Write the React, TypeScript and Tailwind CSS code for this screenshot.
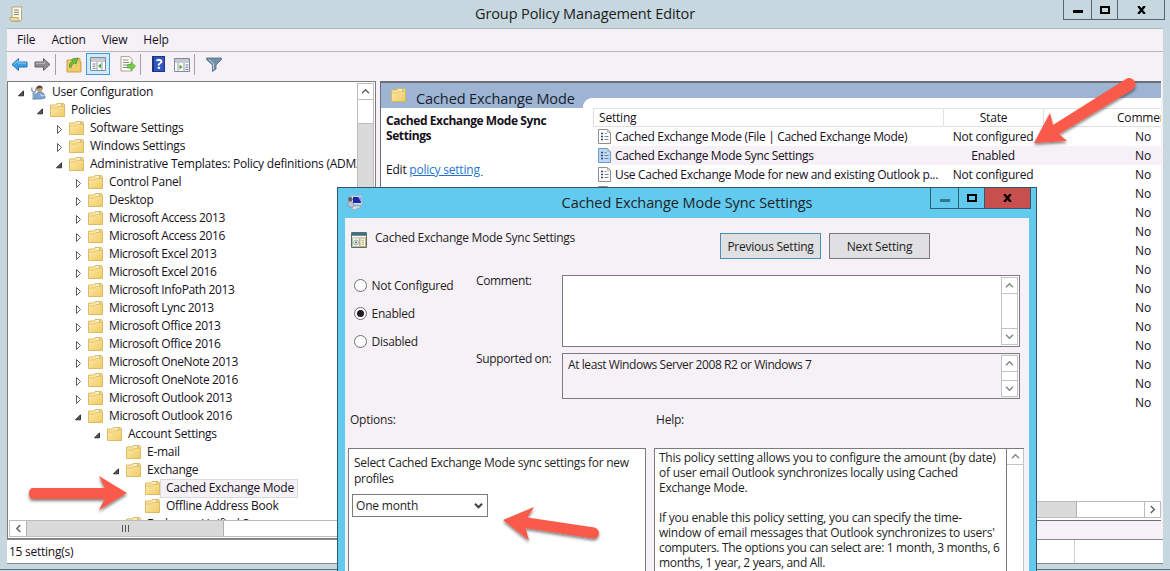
import React from 'react';

type TreeItem = {
  label: string;
  level: number;
  state?: 'open' | 'closed';
  user?: boolean;
  selected?: boolean;
};

const treeItems: TreeItem[] = [
  { label: 'User Configuration', level: 0, state: 'open', user: true },
  { label: 'Policies', level: 1, state: 'open' },
  { label: 'Software Settings', level: 2, state: 'closed' },
  { label: 'Windows Settings', level: 2, state: 'closed' },
  { label: 'Administrative Templates: Policy definitions (ADMX files)', level: 2, state: 'open' },
  { label: 'Control Panel', level: 3, state: 'closed' },
  { label: 'Desktop', level: 3, state: 'closed' },
  { label: 'Microsoft Access 2013', level: 3, state: 'closed' },
  { label: 'Microsoft Access 2016', level: 3, state: 'closed' },
  { label: 'Microsoft Excel 2013', level: 3, state: 'closed' },
  { label: 'Microsoft Excel 2016', level: 3, state: 'closed' },
  { label: 'Microsoft InfoPath 2013', level: 3, state: 'closed' },
  { label: 'Microsoft Lync 2013', level: 3, state: 'closed' },
  { label: 'Microsoft Office 2013', level: 3, state: 'closed' },
  { label: 'Microsoft Office 2016', level: 3, state: 'closed' },
  { label: 'Microsoft OneNote 2013', level: 3, state: 'closed' },
  { label: 'Microsoft OneNote 2016', level: 3, state: 'closed' },
  { label: 'Microsoft Outlook 2013', level: 3, state: 'closed' },
  { label: 'Microsoft Outlook 2016', level: 3, state: 'open' },
  { label: 'Account Settings', level: 4, state: 'open' },
  { label: 'E-mail', level: 5 },
  { label: 'Exchange', level: 5, state: 'open' },
  { label: 'Cached Exchange Mode', level: 6, selected: true },
  { label: 'Offline Address Book', level: 6 },
  { label: 'Exchange Unified S', level: 5 },
];

const policies = [
  { name: 'Cached Exchange Mode (File | Cached Exchange Mode)', state: 'Not configured' },
  { name: 'Cached Exchange Mode Sync Settings', state: 'Enabled', selected: true },
  { name: 'Use Cached Exchange Mode for new and existing Outlook p...', state: 'Not configured' },
  ...Array.from({ length: 12 }, () => ({ name: '', state: '', selected: false })),
];

const helpLines = [
  'This policy setting allows you to configure the amount (by date)',
  'of user email Outlook synchronizes locally using Cached',
  'Exchange Mode.',
  '',
  'If you enable this policy setting, you can specify the time-',
  "window of email messages that Outlook synchronizes to users'",
  'computers. The options you can select are: 1 month, 3 months, 6',
  'months, 1 year, 2 years, and All.',
];

const FolderIcon = () => (
  <svg className="w-[15px] h-[14px] shrink-0" viewBox="0 0 15 14">
    <defs>
      <linearGradient id="folder" x1="0" y1="0" x2="1" y2="1">
        <stop offset="0" stopColor="#fdebb0" />
        <stop offset="1" stopColor="#f0cb62" />
      </linearGradient>
    </defs>
    <path d="M.5 2h5l1.500-1.500h6.500l1 1.300v11.700H.5z" fill="url(#folder)" stroke="#d9b65c" strokeWidth=".9" />
    <path d="M1 5h5.500L8 3.500h6" fill="none" stroke="#e0bf6c" strokeWidth=".8" />
    <path d="M8 2h3" stroke="#fff8df" strokeWidth="1.200" />
    <path d="M11 2h1.500" stroke="#8aa7a0" />
  </svg>
);

const UserIcon = () => (
  <svg className="w-[15px] h-[15px] shrink-0" viewBox="0 0 15 15">
    <path d="M4 14c0-5 2-7 5-7s5 2 5 6l-4 1z" fill="#7fa3d2" stroke="#4f76ac" strokeWidth=".7" />
    <circle cx="8.500" cy="4" r="3" fill="#c99d6b" />
    <path d="M5.400 4C5.400 1 7 .4 8.600.4S12 1.500 11.600 4C10 2 8 3.600 5.400 4z" fill="#5d4a36" />
    <path d="M.8 2.500v3l1.400 1.300V14h1.600V6.800L5 5.500v-3" fill="none" stroke="#7899bb" strokeWidth="1.300" />
    <path d="M9 9l2 2 2.500-.6" stroke="#d8e8f8" fill="none" />
  </svg>
);

const Expander = ({ state }: { state?: 'open' | 'closed' }) => (
  <svg className="w-[8px] h-[9px] shrink-0 mt-[2px]" viewBox="0 0 8 9">
    {state === 'open' && <path d="M6.500 1.800v5H1.500z" fill="#595959" stroke="#262626" strokeWidth=".9" />}
    {state === 'closed' && <path d="M2.500 .5v8l4-4z" fill="#fff" stroke="#5e5e5e" />}
  </svg>
);

const PolicyIcon = ({ selected }: { selected?: boolean }) => (
  <svg className="w-[13px] h-[15px] shrink-0" viewBox="0 0 13 15">
    <path d="M.5.5h9l3 3v11H.5z" fill={selected ? '#bcd8f6' : '#fff'} stroke={selected ? '#6f98ca' : '#8f8f8f'} />
    <path d="M9.500.5v3h3" fill="none" stroke="#b9b9a0" />
    <path d="M3 4.500h2M3 7.500h2M3 10.500h2" stroke="#2d4368" strokeWidth="1.600" />
    <path d="M6.500 4.500h2M6.500 7.500h4M6.500 10.500h4" stroke="#77839c" />
  </svg>
);

const Chevron = ({ d, color = '#606060' }: { d: string; color?: string }) => (
  <svg className="w-[9px] h-[9px]" viewBox="0 0 9 9">
    <path d={d} fill="none" stroke={color} strokeWidth="1.400" />
  </svg>
);

const UP = 'M1 6.3L4.5 2.8L8 6.3';
const DOWN = 'M1 2.8L4.5 6.3L8 2.8';
const LEFT = 'M6.3 1L2.8 4.5L6.3 8';
const RIGHT = 'M2.8 1L6.3 4.5L2.8 8';

const MinIcon = ({ color = '#000' }: { color?: string }) => (
  <svg className="w-[10px] h-[3px] mt-[4px]" viewBox="0 0 10 3"><path d="M0 0h10v3H0z" fill={color} /></svg>
);
const MaxIcon = () => (
  <svg className="w-[10px] h-[8px]" viewBox="0 0 10 8"><path d="M1 1h8v6H1z" fill="none" stroke="#000" strokeWidth="2" /></svg>
);
const CloseIcon = () => (
  <svg className="w-[9px] h-[8px]" viewBox="0 0 9 8"><path d="M1.200 0L7.800 8M7.800 0L1.200 8" stroke="#000" strokeWidth="2.300" /></svg>
);

const TitleBar = () => (
  <div className="h-[28px] shrink-0 flex relative justify-center">
    <svg className="absolute left-[9px] top-[6px] w-[15px] h-[16px]" viewBox="0 0 15 16">
      <path d="M3 1h10.500c-1 1-1 2-1 3v9c0 2-1 2-2 2H3z" fill="#fffbe6" stroke="#b5a77b" />
      <path d="M1 11.500h8.500c-.8 1.500 0 3.500 1 3.500H2.500C1 15 .6 13 1 11.500z" fill="#eadba4" stroke="#a99a6c" strokeWidth=".8" />
      <path d="M5 4h5M5 6.300h5M5 8.600h5" stroke="#7f7f7f" />
    </svg>
    <span className="text-[14.5px] leading-[28px] text-[#1b1b1b] tracking-[-0.11px]">Group Policy Management Editor</span>
    <div className="absolute top-0 right-[5px] flex h-[20px] border border-t-0 border-[#56666f]">
      <div className="w-[28px] flex items-center justify-center border-r border-[#56666f]"><MinIcon /></div>
      <div className="w-[26px] flex items-center justify-center border-r border-[#56666f]"><MaxIcon /></div>
      <div className="w-[46px] flex items-center justify-center"><CloseIcon /></div>
    </div>
  </div>
);

const Toolbar = () => (
  <div className="h-[29px] shrink-0 flex items-center bg-[#f6f1f6] pl-[4px] pb-[4px] border-t border-[#b8b6ba]">
    <svg className="w-[17px] h-[15px]" viewBox="0 0 17 15">
      <path d="M1 7.500L7.500 1.500v3.500H16v5H7.500v3.500z" fill="#3a9fe3" stroke="#2674ad" />
      <path d="M3 7.200L7 3.500v2.500h8" fill="none" stroke="#8dd0fa" />
    </svg>
    <svg className="w-[17px] h-[15px] ml-[6px]" viewBox="0 0 17 15">
      <path d="M16 7.500L9.500 1.500v3.500H1v5h8.500v3.500z" fill="#8c8c8c" stroke="#646464" />
      <path d="M2 6.300h8.500v-2" fill="none" stroke="#bdbdbd" />
    </svg>
    <div className="w-px h-[21px] bg-[#a5a3a7] ml-[4px]" />
    <svg className="w-[16px] h-[17px] ml-[10px]" viewBox="0 0 16 17">
      <path d="M1 4h5l1.500-1.500H14V6h1v10H1z" fill="#f0cb6b" stroke="#c39a3e" strokeWidth=".9" />
      <path d="M3.500 11c-.5-3 1-4.500 3-5.500L5.500 3.500 12 2l-2 6-1.500-1.200C7 7.800 5.500 8.500 5 11.500z" fill="#69c53c" stroke="#398b25" strokeWidth=".7" />
    </svg>
    <div className="w-[24px] h-[22px] ml-[4px] bg-[#cdebfb] border border-[#3f9bd5] flex items-center justify-center">
      <svg className="w-[16px] h-[14px]" viewBox="0 0 16 14">
        <path d="M.5.5h15v13H.5z" fill="#fff" stroke="#7d8899" />
        <path d="M1 2h14M1 4h14" stroke="#8e98a7" strokeWidth="1.200" />
        <path d="M7 5v9M12 5v9" stroke="#8d96a5" />
        <path d="M2.500 7h3M2.500 9.200h3M2.500 11.400h3" stroke="#697789" />
        <path d="M11 6.500v5L8 9z" fill="#47a436" />
      </svg>
    </div>
    <svg className="w-[16px] h-[16px] ml-[10px]" viewBox="0 0 16 16">
      <path d="M1 .6h8.500L12 3.200V15H1z" fill="#fdfdf3" stroke="#a29c86" strokeWidth=".9" />
      <path d="M3 4h5.500M3 6.500h6M3 9h4M3 11.500h4" stroke="#858b95" />
      <path d="M7.500 8.500h3.500V6l4.500 4.200L11 14.400V12H7.500z" fill="#75cf45" stroke="#479c2c" strokeWidth=".7" />
    </svg>
    <div className="w-px h-[21px] bg-[#a5a3a7] ml-[4px]" />
    <svg className="w-[13px] h-[16px] ml-[11px]" viewBox="0 0 13 16">
      <rect x=".5" y=".5" width="12" height="15" fill="#3256bd" stroke="#1c3586" />
      <path d="M1.500 1v14" stroke="#182e7b" />
      <text x="7.200" y="12.700" textAnchor="middle" fontSize="13.500" fontWeight="bold" fill="#fff">?</text>
    </svg>
    <svg className="w-[16px] h-[14px] ml-[9px] mt-[2px]" viewBox="0 0 16 14">
      <path d="M.5.5h15v13H.5z" fill="#fff" stroke="#7d8899" />
      <path d="M1 2h14M1 4h14" stroke="#8e98a7" strokeWidth="1.200" />
      <path d="M4 5v9M10 5v9" stroke="#8d96a5" />
      <path d="M11.500 7h3M11.500 9.200h3M11.500 11.400h3" stroke="#697789" />
      <path d="M5.500 6.500v5l3-2.500z" fill="#47a436" />
    </svg>
    <div className="w-px h-[21px] bg-[#a5a3a7] ml-[4px]" />
    <svg className="w-[16px] h-[15px] ml-[11px] mt-[1px]" viewBox="0 0 16 15">
      <path d="M.6 1h14.800v1.700L10 8v4L6.500 14.500V8L.6 2.700z" fill="#748fa8" stroke="#4f6a82" strokeWidth=".8" />
      <path d="M3 2.500l4.500 4.300v5.500" fill="none" stroke="#c3d6e4" />
    </svg>
  </div>
);

const labelTracking = (item: TreeItem) => {
  if (item.label.startsWith('Microsoft')) return 'tracking-[-0.38px]';
  return item.level === 2 ? 'tracking-[-0.22px]' : 'tracking-[-0.26px]';
};

const Tree = () => (
  <div className="w-[369px] shrink-0 flex flex-col bg-white border border-[#7c7b80] p-px">
    <div className="flex flex-1 min-h-0">
      <div className="flex-1 min-w-0 overflow-hidden">
        {treeItems.map((item) => (
          <div key={item.label} className="h-[18px] flex items-center">
            <div className="shrink-0" style={{ width: 8 + item.level * 19 }} />
            <Expander state={item.state} />
            <div className="w-[6px] shrink-0" />
            {item.user ? <UserIcon /> : <FolderIcon />}
            <span
              className={
                item.selected
                  ? 'ml-[1px] h-[17px] leading-[16px] pl-[5px] pr-[3px] whitespace-nowrap bg-[#f6f1f6] outline outline-[#dcd9df] tracking-[-0.26px]'
                  : `ml-[6px] leading-[16px] whitespace-nowrap ${labelTracking(item)}`
              }
            >
              {item.label}
            </span>
          </div>
        ))}
      </div>
      <div className="w-[17px] shrink-0 flex flex-col border-x border-[#bcbcbc] bg-[#dadada]">
        <div className="h-[17px] flex items-center justify-center bg-white border-y border-[#bcbcbc]"><Chevron d={UP} /></div>
        <div className="h-[24px] bg-white border-b border-[#bcbcbc]" />
      </div>
    </div>
    <div className="h-[17px] shrink-0 flex border border-[#bcbcbc]">
      <div className="w-[16px] flex items-center justify-center"><Chevron d={LEFT} /></div>
      <div className="w-[198px] bg-[#dadada] border-x border-[#b0b0b0] flex items-center justify-center gap-[2px]">
        <div className="w-px h-[7px] bg-[#555]" />
        <div className="w-px h-[7px] bg-[#555]" />
        <div className="w-px h-[7px] bg-[#555]" />
      </div>
    </div>
  </div>
);

const PolicyList = () => (
  <div className="flex-1 min-w-0 h-[440px] flex flex-col overflow-hidden bg-white border-l border-t-2 border-b border-[#6c6f7a]">
    <div className="h-[25px] shrink-0 flex bg-[#9db5d3]">
      <div className="w-[202px] shrink-0 flex items-center">
        <div className="ml-[10px] -mt-[1px]"><FolderIcon /></div>
        <span className="ml-[10px] mt-[7px] text-[14.5px] leading-[18px] text-[#16202e] whitespace-nowrap tracking-[-0.1px]">Cached Exchange Mode</span>
      </div>
      <div className="flex-1 mt-[15px] bg-white rounded-tl-[9px]" />
    </div>
    <div className="flex flex-1 min-h-0">
      <div className="w-[212px] shrink-0 pl-[5px] pt-[5px] leading-[15px]">
        <div className="font-bold tracking-[-0.42px]">Cached Exchange Mode Sync<br />Settings</div>
        <div className="mt-[19px] tracking-[-0.22px]">Edit <span className="text-[#1f74cf] underline whitespace-pre">policy setting </span></div>
      </div>
      <div className="flex-1 min-w-0 overflow-hidden">
        <div className="w-[653px] h-[19px] flex border border-[#e2e0e3] leading-[18px]">
          <div className="w-[350px] shrink-0 pl-[5px] border-r border-[#e2e0e3] tracking-[-0.2px]">Setting</div>
          <div className="w-[100px] shrink-0 text-center border-r border-[#e2e0e3] tracking-[-0.2px]">State</div>
          <div className="w-[200px] shrink-0 text-center tracking-[-0.2px]">Comment</div>
        </div>
        {policies.map((policy, i) => (
          <div key={i} className="w-[650px] h-[19px] flex leading-[20px] tracking-[-0.24px]">
            <div className="w-[18px] pl-[5px] flex items-center"><PolicyIcon selected={policy.selected} /></div>
            <div className={policy.selected ? 'flex flex-1 bg-[#f6f1f6]' : 'flex flex-1'}>
              <div className="w-[332px] pl-[4px] whitespace-nowrap tracking-[-0.32px]">{policy.name}</div>
              <div className="w-[100px] text-center">{policy.state}</div>
              <div className="w-[200px] text-center">No</div>
            </div>
          </div>
        ))}
      </div>
    </div>
    <div className="h-[17px] shrink-0 flex justify-end border-y border-[#bcbcbc] mb-[2px]">
      <div className="flex-1 bg-[#dadada] border-r border-[#b0b0b0]" />
      <div className="w-[67px]" />
      <div className="w-[17px] flex items-center justify-center border-x border-[#bcbcbc]"><Chevron d={RIGHT} /></div>
    </div>
  </div>
);

const ScrollBar = () => (
  <div className="w-[17px] shrink-0 m-px flex flex-col justify-between border border-[#c3c3c3] bg-white">
    <div className="h-[16px] flex items-center justify-center border-b border-[#c3c3c3]"><Chevron d={UP} color="#858585" /></div>
    <div className="h-[16px] flex items-center justify-center border-t border-[#c3c3c3]"><Chevron d={DOWN} color="#858585" /></div>
  </div>
);

const Radio = ({ label, checked }: { label: string; checked?: boolean }) => (
  <div className="h-[28px] flex items-center">
    <div className="w-[13px] h-[13px] rounded-full border border-[#6f6f6f] bg-white flex items-center justify-center">
      {checked && <div className="w-[7px] h-[7px] rounded-full bg-[#1e1e1e]" />}
    </div>
    <span className="ml-[5px] pt-[2px] tracking-[-0.27px]">{label}</span>
  </div>
);

const SettingDialog = () => (
  <div className="absolute left-[337px] top-[187px] w-[700px] h-[400px] flex flex-col border border-[#35566a] bg-[#62caef] px-[7px] text-[#1e1e1e]">
    <div className="h-[30px] shrink-0 flex justify-center relative">
      <svg className="absolute left-[2px] top-[7px] w-[16px] h-[16px]" viewBox="0 0 16 16">
        <path d="M4 .8h11v9H4z" fill="#dfe3ea" stroke="#a9b4c4" strokeWidth=".8" />
        <path d="M6 2h8v6H6z" fill="#1a27a8" />
        <path d="M11 2h3.500v6z" fill="#7fa6e8" />
        <path d="M5 11h8.500v1.500L8 14.500H5z" fill="#d9dbe0" stroke="#9ba0ab" strokeWidth=".7" />
        <circle cx="3.300" cy="4.300" r="2.300" fill="#745a5c" />
        <path d="M.6 10.500c0-5.500 6-5.500 6.200 0l-2 2.500z" fill="#b9c3d3" stroke="#7886a3" strokeWidth=".7" />
      </svg>
      <span className="text-[14.5px] leading-[30px] tracking-[-0.07px]">Cached Exchange Mode Sync Settings</span>
      <div className="absolute top-0 -right-[2px] flex h-[21px] border border-t-0 border-[#2d5b70]">
        <div className="w-[28px] flex items-center justify-center border-r border-[#2d5b70]"><MinIcon color="#34778f" /></div>
        <div className="w-[26px] flex items-center justify-center border-r border-[#2d5b70]"><MaxIcon /></div>
        <div className="w-[45px] flex items-center justify-center bg-[#c7504f]"><CloseIcon /></div>
      </div>
    </div>
    <div className="flex-1 flex flex-col bg-[#f6f1f6] overflow-hidden">
      <div className="h-[57px] shrink-0 flex relative pl-[6px] pt-[14px]">
        <svg className="w-[16px] h-[16px]" viewBox="0 0 16 16">
          <path d="M.5.5h15v15H.5z" fill="#dfe3da" stroke="#5a6f6c" />
          <path d="M1 1h14v3H1z" fill="#3b6f86" />
          <path d="M1 4.500h14" stroke="#f7f8f2" strokeWidth="1.500" />
          <path d="M1.500 6h7v8.500h-7z" fill="#fbfaf0" stroke="#a8aa97" strokeWidth=".7" />
          <circle cx="5" cy="10.500" r="2.500" fill="#e9f1ee" stroke="#83a593" strokeWidth=".8" />
          <circle cx="5" cy="10.500" r=".9" fill="#3f6b55" />
          <path d="M9 6h5.500v8.500H9z" fill="#fffbe8" stroke="#b99a55" strokeWidth=".8" />
          <path d="M10.500 8.200h2.500M10.500 10.200h2.500M10.500 12.200h2.500" stroke="#8b8b74" strokeWidth=".8" />
        </svg>
        <span className="ml-[8px] leading-[12px] tracking-[-0.28px]">Cached Exchange Mode Sync Settings</span>
        <div className="absolute left-[375px] top-[15px] flex gap-[8px] tracking-[-0.24px]">
          <button className="w-[101px] h-[26px] bg-[#e0dfe1] border border-[#4b8fb9] leading-[23px]">Previous Setting</button>
          <button className="w-[101px] h-[26px] bg-[#e0dfe1] border border-[#7b7a7d] leading-[23px]">Next Setting</button>
        </div>
      </div>
      <div className="flex shrink-0 h-[125px]">
        <div className="w-[131px] pl-[8.500px] -mt-[4px]">
          <Radio label="Not Configured" />
          <Radio label="Enabled" checked />
          <Radio label="Disabled" />
        </div>
        <div className="w-[86px] tracking-[-0.36px] leading-[12px]">
          <div className="h-[78px]">Comment:</div>
          <div>Supported on:</div>
        </div>
        <div className="w-[458px] flex flex-col gap-[6px]">
          <div className="h-[72px] flex justify-end bg-white border border-[#7b7a7d]"><ScrollBar /></div>
          <div className="h-[46px] flex justify-between border border-[#7b7a7d]">
            <span className="pl-[5px] pt-[1px] leading-[19px] tracking-[-0.42px]">At least Windows Server 2008 R2 or Windows 7</span>
            <ScrollBar />
          </div>
        </div>
      </div>
      <div className="h-[48px] shrink-0 flex pl-[5px] pt-[11px] tracking-[-0.22px] leading-[18px]">
        <span className="w-[306px]">Options:</span>
        <span>Help:</span>
      </div>
      <div className="flex-1 flex pl-[3px]">
        <div className="w-[298px] bg-white border border-[#7b7a7d] pl-[3px] pt-[6px] leading-[16px]">
          <div className="pl-[2px] tracking-[-0.31px]">Select Cached Exchange Mode sync settings for new<br />profiles</div>
          <div className="mt-[7px] w-[136px] h-[23px] border border-[#7b7a7d] flex items-center justify-between pl-[3px] pr-[4px]">
            <span className="leading-[20px] tracking-[-0.2px]">One month</span>
            <svg className="w-[9px] h-[9px]" viewBox="0 0 9 9"><path d={DOWN} fill="none" stroke="#3f3f3f" strokeWidth="2" /></svg>
          </div>
        </div>
        <div className="ml-[8px] w-[370px] flex bg-white border-t border-l border-[#7b7a7d]">
          <div className="w-[352px] pl-[4px] pt-[1px] leading-[16px] tracking-[-0.24px] whitespace-nowrap">
            {helpLines.map((line, i) => (
              <div key={i} className={/\d/.test(line) ? 'h-[15px] tracking-[-0.34px]' : 'h-[15px]'}>{line}</div>
            ))}
          </div>
          <div className="w-[18px] border-x border-l-[#7b7a7d] border-r-[#c3c3c3]">
            <div className="h-[16px] flex items-center justify-center border-b border-[#c3c3c3]"><Chevron d={UP} color="#858585" /></div>
          </div>
        </div>
      </div>
    </div>
  </div>
);

// Red callout arrows drawn over the windows
const Callouts = () => (
  <svg className="absolute left-0 top-0 w-full h-full pointer-events-none" viewBox="0 0 1170 571">
    <defs>
      <filter id="shadow" x="-20%" y="-20%" width="140%" height="150%">
        <feDropShadow dx="0" dy="2" stdDeviation="1.5" floodColor="#000" floodOpacity=".5" />
      </filter>
    </defs>
    <g fill="#f95a49" filter="url(#shadow)">
      <path d="M127 493L99 510L104.500 499H33Q29 499 29 493.500Q29 488 33 488H104.500L99 476z" />
      <path d="M1034 143L1050 113L1053 125L1126 79Q1131 76 1134.500 81Q1137.500 86 1132 90L1059 134L1067 141z" />
      <path d="M503 520L534 507L527.500 517.500L594.500 527.500Q599 529 599 533.500Q598 539 593 538.500L525.500 528L529 540.500z" />
    </g>
  </svg>
);

const App: React.FC = () => {
  return (
    <div className="relative w-[1170px] h-[571px] overflow-hidden flex flex-col bg-[#c6d7df] font-['Open_Sans',sans-serif] text-[12px] text-[#151020]">
      <TitleBar />
      <div className="ml-[7px] mr-[7px] h-[534px] shrink-0 flex flex-col bg-[#f6f1f6]">
        <div className="h-[23px] shrink-0 flex pl-[10px] gap-[16px] border-t border-[#a9b9c2] leading-[22px] tracking-[-0.15px]">
          <span>File</span>
          <span>Action</span>
          <span>View</span>
          <span>Help</span>
        </div>
        <Toolbar />
        <div className="mt-[1px] h-[458px] shrink-0 flex items-start gap-[4px] mr-[2px]">
          <div className="h-full flex"><Tree /></div>
          <PolicyList />
        </div>
        <div className="flex-1 flex border-y border-[#8c8a8f] bg-white">
          <div className="w-[1068px] pl-[2px] leading-[23px] tracking-[-0.26px] border-r border-[#d0ced2]">15 setting(s)</div>
        </div>
      </div>
      <div className="mt-[7px] h-px shrink-0 bg-[#5f6d75]" />
      <SettingDialog />
      <Callouts />
    </div>
  );
};

export default App;
